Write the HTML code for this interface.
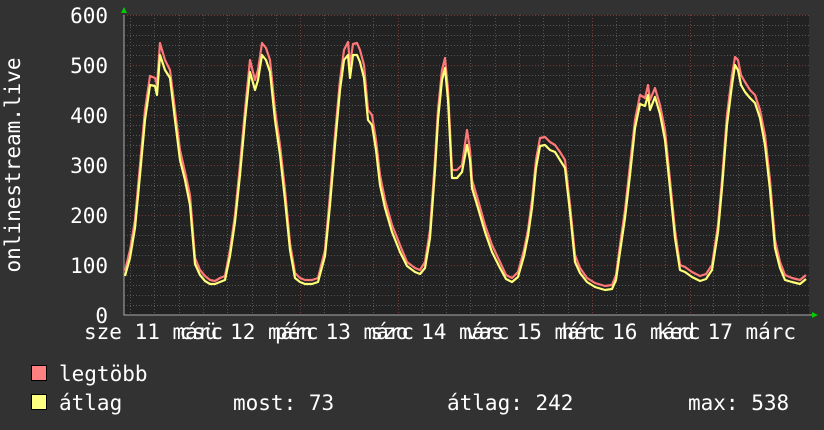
<!DOCTYPE html><html><head><meta charset="utf-8"><style>
html,body{margin:0;padding:0;background:#323232;}
svg{display:block}
text{font-family:"DejaVu Sans Mono","Liberation Mono",monospace;fill:#fff}
</style></head><body>
<svg width="824" height="430" viewBox="0 0 824 430" xmlns="http://www.w3.org/2000/svg">
<rect width="824" height="430" fill="#323232"/>
<rect x="124" y="15" width="685" height="300" fill="#222"/>
<g stroke="#555" stroke-width="1" stroke-dasharray="1,2">
<path d="M124 25.5H809M124 35.5H809M124 45.5H809M124 55.5H809M124 75.5H809M124 85.5H809M124 95.5H809M124 105.5H809M124 125.5H809M124 135.5H809M124 145.5H809M124 155.5H809M124 175.5H809M124 185.5H809M124 195.5H809M124 205.5H809M124 225.5H809M124 235.5H809M124 245.5H809M124 255.5H809M124 275.5H809M124 285.5H809M124 295.5H809M124 305.5H809"/>
<path d="M130.5 15V315M154.5 15V315M179.5 15V315M227.5 15V315M252.5 15V315M276.5 15V315M324.5 15V315M349.5 15V315M373.5 15V315M422.5 15V315M446.5 15V315M470.5 15V315M519.5 15V315M543.5 15V315M568.5 15V315M616.5 15V315M640.5 15V315M665.5 15V315M713.5 15V315M738.5 15V315M762.5 15V315"/>
</g>
<g stroke="#7a3a3a" stroke-width="1" stroke-dasharray="1,2">
<path d="M124 15.5H809M124 65.5H809M124 115.5H809M124 165.5H809M124 215.5H809M124 265.5H809"/>
<path d="M203.5 15V315M300.5 15V315M398.5 15V315M495.5 15V315M592.5 15V315M690.5 15V315M787.5 15V315"/>
</g>
<path d="M124 15V315H812" stroke="#aaa" fill="none" stroke-width="1"/>
<path d="M121 13l3-6 3 6z" fill="#0c0"/>
<path d="M812 312l6 3-6 3z" fill="#0c0"/>
<g fill="none" stroke-width="2.2" stroke-linejoin="round">
<polyline stroke="#ff7878" points="125,271 130,250 135,220 140,165 145,110 150,76 155,78 157,85 160,43 165,60 170,70 175,110 180,150 185,172 190,195 195,258 200,270 205,276 210,280 215,281 220,278 225,276 230,250 235,215 240,165 245,110 250,60 255,80 258,70 262,43 266,48 270,60 275,110 280,145 285,190 290,243 295,273 300,278 305,280 312,280 318,278 325,250 330,195 335,135 340,80 344,50 348,42 350,65 353,44 357,43 360,50 364,65 368,110 372,115 376,140 380,175 385,200 392,225 400,245 407,262 415,268 420,270 425,262 430,230 435,160 438,110 442,70 445,58 448,90 452,170 457,170 462,165 467,130 470,150 472,180 478,200 485,225 492,245 500,262 506,275 512,278 518,272 524,250 528,230 532,200 536,160 540,138 545,137 550,142 555,145 560,152 565,160 570,205 575,255 580,268 587,278 595,283 605,286 612,285 616,275 620,245 625,210 630,165 635,120 640,95 645,98 648,85 650,100 655,88 660,105 665,130 670,180 675,230 680,265 685,267 692,272 700,276 706,274 712,265 718,225 722,180 727,115 732,75 735,57 738,60 741,75 745,82 750,90 755,95 760,110 765,135 770,180 775,240 780,262 785,275 792,278 800,280 806,275"/>
<polyline stroke="#ffff78" points="125,276 130,258 135,228 140,175 145,120 150,85 155,86 157,95 160,55 165,70 170,78 175,120 180,160 185,180 190,205 195,264 200,275 205,281 210,284 215,284 220,282 225,280 230,256 235,222 240,175 245,120 250,72 255,90 258,80 262,55 266,60 270,72 275,120 280,155 285,200 290,250 295,278 300,282 305,284 312,284 318,282 325,256 330,205 335,145 340,90 344,60 348,55 350,78 353,55 357,55 360,62 364,78 368,120 372,125 376,150 380,185 385,208 392,232 400,252 407,266 415,272 420,274 425,268 430,238 435,170 438,120 442,80 445,68 448,100 452,178 457,178 462,172 467,145 470,160 472,188 478,208 485,232 492,252 500,268 506,279 512,282 518,277 524,256 528,236 532,208 536,168 540,146 545,145 550,150 555,152 560,160 565,168 570,212 575,262 580,273 587,282 595,287 605,290 612,289 616,280 620,252 625,218 630,175 635,128 640,104 645,106 648,95 650,110 655,97 660,114 665,140 670,188 675,238 680,270 685,272 692,277 700,281 706,279 712,270 718,232 722,188 727,125 732,85 735,65 738,70 741,85 745,92 750,98 755,103 760,118 765,145 770,190 775,248 780,268 785,280 792,282 800,284 806,279"/>
</g>
<g font-size="21" text-anchor="end">
<text x="108" y="23">600</text><text x="108" y="73">500</text><text x="108" y="123">400</text><text x="108" y="173">300</text><text x="108" y="223">200</text><text x="108" y="273">100</text><text x="108" y="323">0</text>
</g>
<text font-size="21" transform="translate(20,165) rotate(-90)" text-anchor="middle">onlinestream.live</text>
<g font-size="21">
<text x="84" y="339">sze 11 márc</text>
<text x="179.5" y="339">csü 12 márc</text>
<text x="275" y="339">pén 13 márc</text>
<text x="370.5" y="339">szo 14 márc</text>
<text x="466" y="339">vas 15 márc</text>
<text x="561.5" y="339">hét 16 márc</text>
<text x="657" y="339">ked 17 márc</text>
</g>
<rect x="31.5" y="365.5" width="15" height="15" fill="#ff8080" stroke="#000"/>
<rect x="31.5" y="394.5" width="15" height="15" fill="#ffff80" stroke="#000"/>
<g font-size="21">
<text x="59" y="381">legtöbb</text>
<text x="59" y="410">átlag</text>
<text x="233" y="410">most: 73</text>
<text x="447" y="410">átlag: 242</text>
<text x="688" y="410">max: 538</text>
</g>
</svg>
</body></html>
